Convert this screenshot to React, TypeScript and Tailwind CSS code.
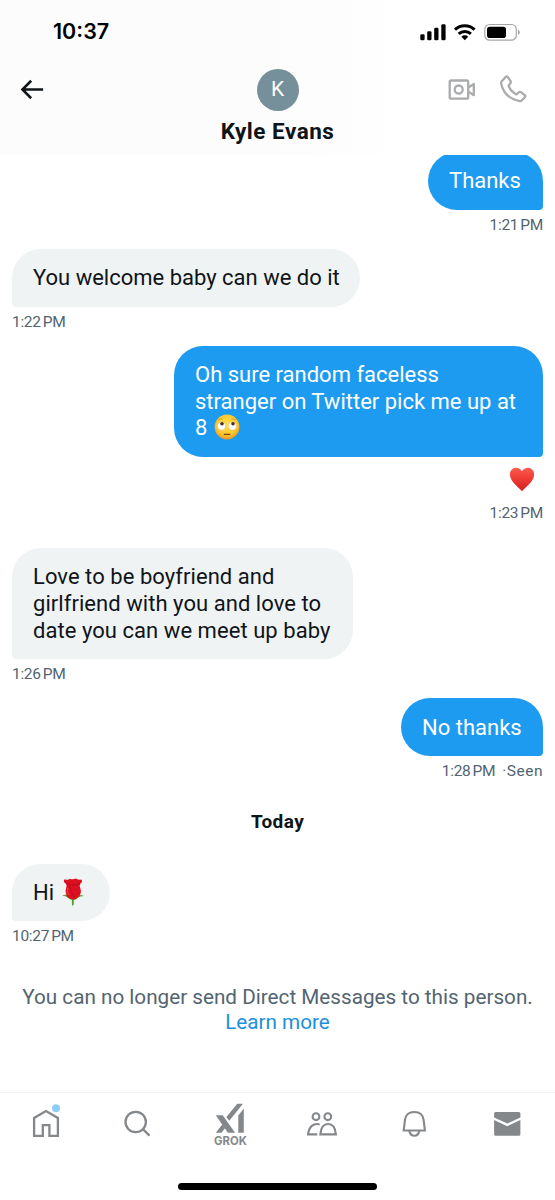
import React from 'react';
import { clsx } from 'clsx';

interface Message {
  id: number;
  mine: boolean;
  lines: React.ReactNode[];
  time: string;
  size: string;
  liked?: boolean;
  seen?: boolean;
}

function EyeRollEmoji() {
  return (
    <svg className="-my-2 ml-[1px] inline-block w-[26px] h-[26px] align-[3px]" viewBox="0 0 26 26" role="img" aria-label="Face with rolling eyes">
      <defs>
        <radialGradient id="face" cx="50%" cy="40%" r="60%">
          <stop offset="0" stopColor="#fde04d" />
          <stop offset="0.7" stopColor="#fbc72c" />
          <stop offset="1" stopColor="#e9962a" />
        </radialGradient>
      </defs>
      <circle cx="13" cy="13" r="12.4" fill="url(#face)" />
      <circle cx="7.5" cy="12" r="4.2" fill="#fff" stroke="#d9a441" strokeWidth="0.4" />
      <circle cx="18.5" cy="12" r="4.2" fill="#fff" stroke="#d9a441" strokeWidth="0.4" />
      <circle cx="8" cy="9.7" r="1.8" fill="#4a2f18" />
      <circle cx="19" cy="9.7" r="1.8" fill="#4a2f18" />
      <path d="M4 6.2Q6 4.4 8.6 4.8M17.4 4.8Q20 4.4 22 6.2" stroke="#c98a2a" strokeWidth="0.7" fill="none" />
      <path d="M10.3 20.4h5.4" stroke="#7a4616" strokeWidth="1.3" strokeLinecap="round" />
    </svg>
  );
}

function RoseEmoji() {
  return (
    <svg className="-my-2 ml-[1.5px] inline-block w-[24px] h-[28px] align-[1.5px]" viewBox="0 0 24 28" role="img" aria-label="Rose">
      <path d="M11.8 19v7.6" stroke="#4c9a35" strokeWidth="1.8" strokeLinecap="round" />
      <path d="M1 17.6q4 .2 6 2.2q2 2.4 5 2.3q3 .1 5-2.3q2-1.8 6-1.8q-3-1.6-6-.6H7q-3-1.2-6 .2z" fill="#56a33c" />
      <path d="M3.6 1.2Q7 2.6 9 .8Q12 2 14.6.6Q17 2.2 20.4 1.4Q22 3.6 19.4 5.6L18.6 8Q21.2 14 18.4 18Q15.4 21.4 12 21.4Q7.6 21.4 5.4 17.6Q3.8 12.8 5.6 7.6L4.6 5.4Q1.6 3.6 3.6 1.2z" fill="#dc1020" />
      <path d="M5.6 5.6Q11 8.4 18.8 5.4M8.4 8Q10 14 13.6 20.6" stroke="#b80a1a" strokeWidth="0.8" fill="none" />
      <path d="M6.8 9.6Q6 13.6 7.6 17" stroke="#f0404a" strokeWidth="1" fill="none" />
    </svg>
  );
}

function HeartEmoji() {
  return (
    <svg className="w-[26px] h-[25px]" viewBox="0 0 26 25" role="img" aria-label="Red heart">
      <defs>
        <linearGradient id="heart" x1="0" y1="0" x2="0" y2="1">
          <stop offset="0" stopColor="#fb5b50" />
          <stop offset="0.45" stopColor="#f13c35" />
          <stop offset="1" stopColor="#cf1f22" />
        </linearGradient>
      </defs>
      <path d="M13 4.2C15 1.4 17.4.6 19.4.8C23 1.2 25.2 4.2 25.1 7.6C25 14.4 17.6 19.4 13 24.2C8.4 19.4 1 14.4.9 7.6C.8 4.2 3 1.2 6.6.8C8.6.6 11 1.4 13 4.2z" fill="url(#heart)" />
    </svg>
  );
}

const messages: Message[] = [
  { id: 1, mine: true, lines: ['Thanks'], time: '1:21 PM', size: 'w-[115px]' },
  { id: 2, mine: false, lines: ['You welcome baby can we do it'], time: '1:22 PM', size: 'w-[348px]' },
  {
    id: 3,
    mine: true,
    lines: ['Oh sure random faceless', 'stranger on Twitter pick me up at', <>8 <EyeRollEmoji /></>],
    time: '1:23 PM',
    size: 'w-[369px]',
    liked: true,
  },
  {
    id: 4,
    mine: false,
    lines: ['Love to be boyfriend and', 'girlfriend with you and love to', 'date you can we meet up baby'],
    time: '1:26 PM',
    size: 'w-[341px] tracking-[0.05px]',
  },
  { id: 5, mine: true, lines: ['No thanks'], time: '1:28 PM', size: 'w-[142px]', seen: true },
];

const todayMessages: Message[] = [
  { id: 6, mine: false, lines: [<>Hi <RoseEmoji /></>], time: '10:27 PM', size: 'w-[98px]' },
];

function MessageRow({ message }: { message: Message }) {
  const { mine, lines, time, size, liked, seen } = message;
  return (
    <div className={clsx('flex flex-col', mine ? 'items-end' : 'items-start')}>
      <div
        className={clsx(
          'rounded-[29px] px-[21px] pt-[16.25px] pb-[14.75px] text-[22px] leading-[26.75px] whitespace-nowrap',
          mine ? 'bg-[#1d9bf0] text-white rounded-br-[4px]' : 'bg-[#eff3f4] text-[#0f1419] rounded-bl-[4px]',
          size
        )}
      >
        {lines.map((line, i) => (
          <div key={i} className="h-[26.75px]">{line}</div>
        ))}
      </div>
      {liked && (
        <div className="h-[41px] pt-[10px] pr-[8px]">
          <HeartEmoji />
        </div>
      )}
      <div
        className={clsx(
          'text-[15.5px] leading-[30px] tracking-[-0.3px] text-[#536471] [word-spacing:-1.5px]',
          liked ? 'h-[50px]' : 'h-[39.15px]'
        )}
      >
        {time}
        {seen && <span className="ml-[7px] tracking-[0.5px]">·Seen</span>}
      </div>
    </div>
  );
}

function StatusBar() {
  return (
    <div className="flex h-[63px] items-center justify-between pl-[53px] pr-[34px]">
      <span className="font-['Inter'] text-[21.5px] font-semibold text-black">10:37</span>
      <svg className="w-[101px] h-[20px]" viewBox="420 21 101 20" aria-hidden="true">
        <rect x="420.3" y="33.3" width="4.3" height="6" rx="1.3" />
        <rect x="427.2" y="30.3" width="4.3" height="9" rx="1.3" />
        <rect x="434.2" y="26.7" width="4.3" height="12.6" rx="1.3" />
        <rect x="441.3" y="23.3" width="4.3" height="16" rx="1.3" />
        <path d="M455 28.6a14.3 14.3 0 0 1 19.6 0M458.7 32.8a9 9 0 0 1 12.2 0" fill="none" stroke="#000" strokeWidth="3" />
        <path d="M464.8 39.2l-3.4-3.5a4.9 4.9 0 0 1 6.8 0z" />
        <rect x="484.8" y="23.5" width="31.5" height="15.7" rx="4.8" fill="none" stroke="#a5a5a5" strokeWidth="1.2" />
        <rect x="487" y="25.7" width="19" height="11.4" rx="2.8" />
        <path d="M518 28.8q1.8.9 1.8 2.6t-1.8 2.6z" fill="#a5a5a5" />
      </svg>
    </div>
  );
}

function Header() {
  return (
    <header className="h-[154.5px] shrink-0 bg-gradient-to-r from-[#fcfcfd] from-50% to-white to-75%">
      <StatusBar />
      <div className="grid grid-cols-3 pl-[16px] pr-[26px]">
        <button className="mt-[11px] h-[31px] w-[31px]" aria-label="Back">
          <svg viewBox="0 0 24 24" className="h-[31px] w-[31px] fill-[#0f1419]">
            <path d="M7.414 13l5.043 5.04-1.414 1.42L3.586 12l7.457-7.46 1.414 1.42L7.414 11H21v2H7.414z" />
          </svg>
        </button>
        <div className="ml-[10px] flex flex-col items-center pt-[5.5px]">
          <div className="flex h-[42px] w-[42px] items-center justify-center rounded-full bg-[#758f9b] text-[21px] text-white">K</div>
          <h1 className="mt-[6px] whitespace-nowrap text-[22.5px] font-bold leading-[28px] tracking-[0.5px] text-[#0f1419]">Kyle Evans</h1>
        </div>
        <div className="flex justify-end pt-[11px]">
          <svg className="h-[30px] w-[84px] shrink-0" viewBox="445.2 74 84 30" fill="none" stroke="#a9abad" strokeWidth="2.3" strokeLinejoin="round">
            <rect x="449.9" y="80.5" width="18.5" height="18.2" rx="1.5" />
            <circle cx="458.9" cy="89.5" r="4" />
            <path d="M469 87.3l5-3.3v11.2l-5-3.3" />
            <path d="M501.7 81.5l4.3-4.6q.9-.9 1.8 0l3 4.2q.6.9 0 1.8l-2 3q1.8 5 7.8 8.5l2.8-2.2q.9-.7 1.8 0l4 3.1q.8.8 0 1.7l-3 3.3q-1 1-2.6.8Q504.5 98 501.3 83.5q-.3-1.2.4-2z" />
          </svg>
        </div>
      </div>
    </header>
  );
}

function TabBar() {
  return (
    <nav className="mr-[2px] grid grid-cols-6 justify-items-center pt-[7px] text-[#85888b]">
      <svg className="h-[50px] w-[40px]" viewBox="0 0 40 50" fill="none" stroke="currentColor" strokeWidth="2.3">
        <path d="M8.1 35.9V18L20 11.1 31.9 18v17.9h-8.5V25.2h-6.6v10.7z" />
        <circle cx="30" cy="8.3" r="4" fill="#8ecdf8" stroke="none" />
      </svg>
      <svg className="h-[50px] w-[40px]" viewBox="0 0 40 50" fill="none" stroke="currentColor" strokeWidth="2.3">
        <circle cx="17.7" cy="22" r="10.2" />
        <path d="M24.9 29.2l6.6 6.4" />
      </svg>
      <div className="flex flex-col items-center">
        <svg className="h-[35px] w-[40px]" viewBox="0.5 0 40 35" fill="currentColor">
          <path d="M6.3 15.3h6.9L25.6 32.7h-7.2z" />
          <path d="M27.8 3.7h5.7L19.7 20.8l-2.8-3.9z" />
          <path d="M6.3 32.7l6.6-8.4 2.8 3.7-3.7 4.7z" />
          <path d="M34.3 8.5v24.2h-5.5V15.5z" />
        </svg>
        <span className="mt-[0.5px] font-['Inter'] text-[11.3px] font-bold leading-[13px]">GROK</span>
      </div>
      <svg className="h-[50px] w-[40px]" viewBox="0.5 0 40 50" fill="none" stroke="currentColor" strokeWidth="2.1">
        <circle cx="13.5" cy="16.7" r="3.4" />
        <circle cx="25.3" cy="16.7" r="3.4" />
        <path d="M17.8 34.4C18.4 27.5 21 24 25.6 24s7.2 3.5 7.8 10.4z" />
        <path d="M17.2 24.4C11 22.8 6.3 26.5 5.6 34.4h9.2" />
      </svg>
      <svg className="h-[50px] w-[40px]" viewBox="0 0 40 50" fill="none" stroke="currentColor" strokeWidth="2.1">
        <path d="M8.7 30.5l1.3-10.5C10.4 15 14 12 19.3 12s8.9 3 9.3 8l1.3 10.5z" />
        <path d="M14.3 30.8q1 5 5 5t5-5" />
      </svg>
      <svg className="h-[50px] w-[40px]" viewBox="0 0 40 50" fill="currentColor">
        <path d="M7.1 17.5v-4q0-1.5 1.5-1.5h23.3q1.5 0 1.5 1.5v4l-13.1 6z" />
        <path d="M7.1 20.1l13.2 6.1 13.1-6.1v14.1q0 1.5-1.5 1.5H8.6q-1.5 0-1.5-1.5z" />
      </svg>
    </nav>
  );
}

export default function App() {
  return (
    <div className="flex h-[1200px] w-[555px] flex-col overflow-hidden bg-white font-['Roboto','Liberation_Sans',sans-serif]">
      <Header />
      <main className="h-[937px] shrink-0 overflow-hidden px-[12px]">
        <div className="-mt-[2.6px]">
          {messages.map((message) => (
            <MessageRow key={message.id} message={message} />
          ))}
        </div>
        <h2 className="mb-[28.5px] mt-[13.9px] text-center text-[19px] font-bold leading-[26px] tracking-[0.4px] text-[#0f1419]">Today</h2>
        {todayMessages.map((message) => (
          <MessageRow key={message.id} message={message} />
        ))}
        <p className="mt-[24px] whitespace-nowrap text-center text-[20.7px] leading-[25px] text-[#536471]">
          You can no longer send Direct Messages to this person.
          <br />
          <a className="text-[#1d8fdd]">Learn more</a>
        </p>
      </main>
      <footer className="flex flex-1 flex-col border-t border-[#f2f3f4]">
        <TabBar />
        <div className="mx-auto mt-[33px] h-[7px] w-[199px] rounded-full bg-black" />
      </footer>
    </div>
  );
}
